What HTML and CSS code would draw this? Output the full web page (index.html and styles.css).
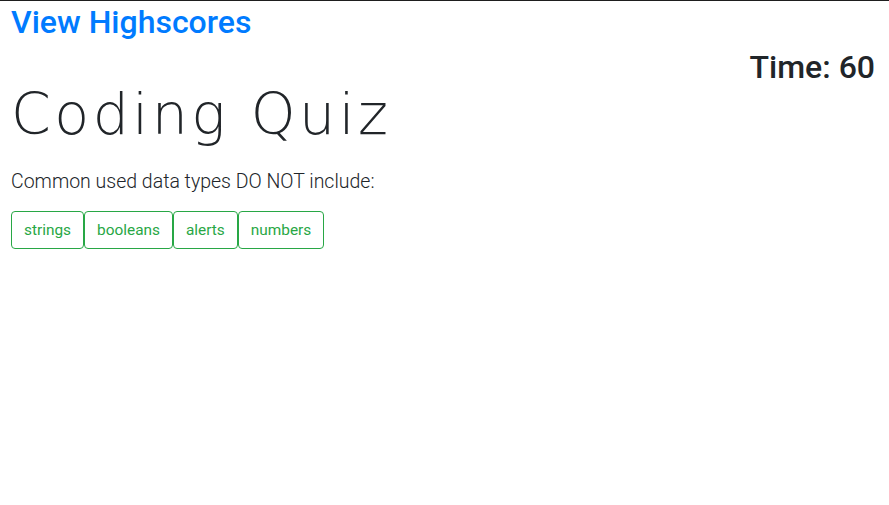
FILE: index.html
```html
<!DOCTYPE html>
<html lang="en">
<head>
<meta charset="utf-8">
<title>Coding Quiz</title>
<link rel="stylesheet" href="styles.css">
</head>
<body>
<header class="topbar">
  <a class="highscores" href="#">View Highscores</a>
</header>
<div class="timer">Time: <span>60</span></div>
<main class="quiz">
  <h1 class="title">Coding Quiz</h1>
  <p class="question">Common used data types DO NOT include:</p>
  <div class="choices">
    <button class="choice">strings</button>
    <button class="choice">booleans</button>
    <button class="choice">alerts</button>
    <button class="choice">numbers</button>
  </div>
</main>
</body>
</html>
```
FILE: styles.css
```css
* { box-sizing: border-box; }
html, body { margin: 0; padding: 0; }
body {
  font-family: Roboto, "Noto Sans", sans-serif;
  color: #212529;
  background: #fff;
  border-top: 1px solid #1e1e1e;
}
.topbar { padding: 2px 11px 0; height: 41px; }
.highscores {
  color: #007bff;
  text-decoration: none;
  font-size: 32px;
  font-weight: 500;
  line-height: 38px;
}
.timer {
  text-align: right;
  padding-right: 14px;
  font-size: 32px;
  font-weight: 500;
  line-height: 32px;
  margin-top: 9px;
}
.quiz { padding: 0 11px; }
.title {
  margin: 3px 0 0;
  font-family: "DejaVu Sans", sans-serif;
  font-size: 57px;
  font-weight: 200;
  letter-spacing: 3.5px;
  line-height: 56px;
}
.question {
  margin: 25px 0 14px;
  font-size: 19.5px;
  font-weight: 300;
  line-height: 30px;
}
.choices { display: flex; }
.choice {
  font-family: inherit;
  font-size: 15.4px;
  color: #28a745;
  background: #fff;
  border: 1px solid #28a745;
  border-radius: 4px;
  padding: 0 12px;
  height: 38px;
  line-height: 36px;
  cursor: pointer;
}
```
